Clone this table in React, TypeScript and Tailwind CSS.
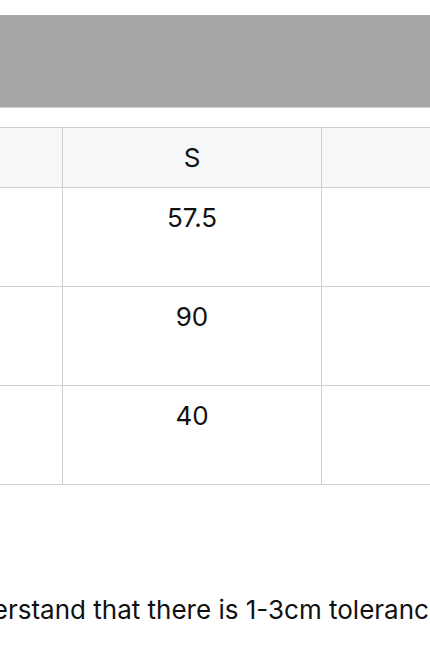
import React from 'react';

const rows = ['57.5', '90', '40'];

export default function App() {
  return (
    <div className="w-[430px] h-[645px] overflow-hidden bg-white pt-[15px] font-['Inter','Liberation_Sans',sans-serif] text-[26px] text-[#111]">
      <div className="h-[93px] bg-[#a6a6a6] border-b border-[#d2d2d2]" />

      <div className="mt-[19px] -ml-[100px] w-max">
        <table className="table-fixed w-[581px] border-collapse">
          <thead>
            <tr className="bg-[#f6f7f9]">
              <th className="w-[162px] h-[60px] border border-[#cfcfcf] font-normal" />
              <th className="w-[259px] h-[60px] border border-[#cfcfcf] font-normal text-center leading-[30px]">S</th>
              <th className="w-[160px] h-[60px] border border-[#cfcfcf] font-normal" />
            </tr>
          </thead>
          <tbody>
            {rows.map((v) => (
              <tr key={v}>
                <td className="h-[99px] border border-[#cfcfcf]" />
                <td className="h-[99px] border border-[#cfcfcf] align-top text-center pt-[15px] leading-[30px]">{v}</td>
                <td className="h-[99px] border border-[#cfcfcf]" />
              </tr>
            ))}
          </tbody>
        </table>
      </div>

      <p className="mt-[110px] -ml-[143px] whitespace-nowrap leading-[30px]">
        Please understand that there is 1-3cm tolerance due to manual measurement.
      </p>
    </div>
  );
}
